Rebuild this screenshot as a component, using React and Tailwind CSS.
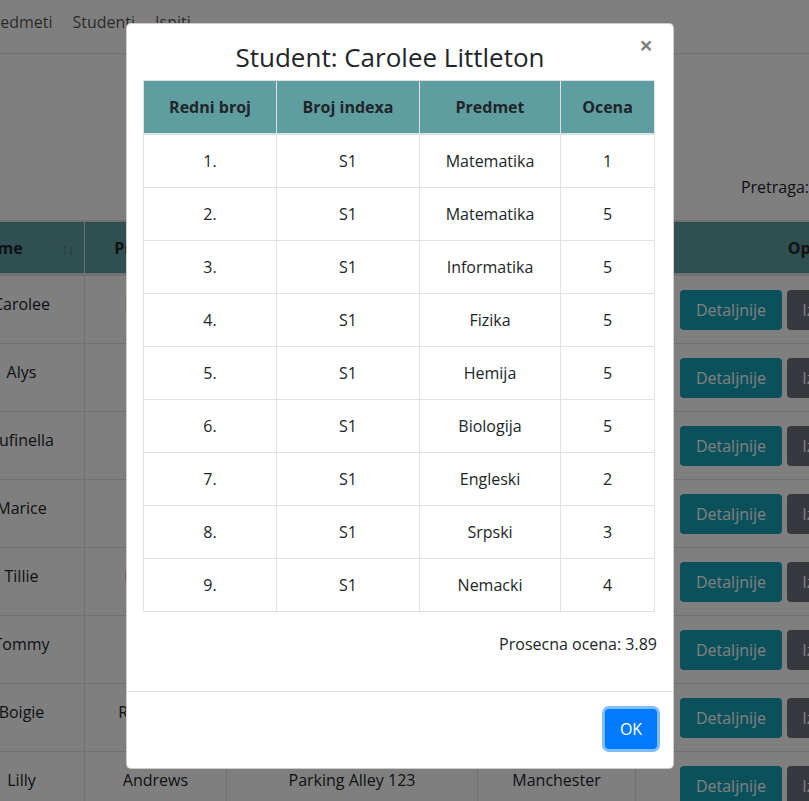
import React from "react";

const grades = [
  ["1.", "S1", "Matematika", "1"],
  ["2.", "S1", "Matematika", "5"],
  ["3.", "S1", "Informatika", "5"],
  ["4.", "S1", "Fizika", "5"],
  ["5.", "S1", "Hemija", "5"],
  ["6.", "S1", "Biologija", "5"],
  ["7.", "S1", "Engleski", "2"],
  ["8.", "S1", "Srpski", "3"],
  ["9.", "S1", "Nemacki", "4"],
];

const students = [
  { ime: "Carolee", prezime: "Littleton", adresa: "Maple Street 12", grad: "London" },
  { ime: "Alys", prezime: "Bride", adresa: "Oak Lane 4", grad: "Leeds" },
  { ime: "Rufinella", prezime: "Keyes", adresa: "Hill Road 8", grad: "York" },
  { ime: "Marice", prezime: "Pride", adresa: "Green Way 21", grad: "Bath" },
  { ime: "Tillie", prezime: "Hartwell", adresa: "River Road 3", grad: "Derby" },
  { ime: "Tommy", prezime: "Ivins", adresa: "Park Lane 17", grad: "Hull" },
  { ime: "Boigie", prezime: "Rosenthal", adresa: "Mill Street 9", grad: "Bristol" },
  { ime: "Lilly", prezime: "Andrews", adresa: "Parking Alley 123", grad: "Manchester" },
];

const cols = ["w-[126px]", "w-[142px]", "w-[251px]", "w-[158px]", "w-[354px]"];
const headPad = ["pl-3 pr-[40px]", "pl-3 pr-[30px]", "pl-3 pr-[30px]", "pl-3 pr-[30px]"];
const modalCols = ["w-[133px]", "w-[143px]", "w-[141px]", "w-[95px] border-r"];

function SortIcon() {
  return (
    <span className="absolute right-[10px] top-1/2 -translate-y-1/2 text-[15px] font-normal opacity-30 tracking-[-1px]">
      ↑↓
    </span>
  );
}

export default function App() {
  return (
    <div className="relative w-[809px] h-[801px] overflow-hidden bg-white text-[16px] leading-[24px] text-[#212529] font-['Open_Sans',sans-serif]">
      {/* page behind the modal */}
      <div className="-ml-[41px] w-[1100px]">
        <nav className="h-[54px] border-b border-[#dee2e6] flex items-start pt-[10px] pl-[15px] text-black/70">
          <a className="px-[10px]">Predmeti</a>
          <a className="px-[10px]">Studenti</a>
          <a className="px-[10px]">Ispiti</a>
        </nav>

        <div className="w-[1031px] pt-[117px]">
          <div className="flex justify-end items-center h-[32px] mb-[17px]">
            <span>Pretraga:</span>
            <div className="ml-2 w-[173px] h-[31px] border border-[#ced4da] rounded-[3px] bg-white" />
          </div>

          {/* table header */}
          <div className="flex h-[56px] border-t-2 border-b-[3px] border-[#dee2e6] bg-[#5f9ea0] font-bold">
            {["Ime", "Prezime", "Adresa", "Grad"].map((h, i) => (
              <div
                key={h}
                className={`${cols[i]} ${headPad[i]} relative flex items-center justify-center border-r border-[#dee2e6]`}
              >
                {h}
                <SortIcon />
              </div>
            ))}
            <div className={`${cols[4]} flex items-center justify-center`}>Opcije</div>
          </div>

          {/* table rows */}
          {students.map((s) => (
            <div key={s.ime} className="flex h-[68px] border-b border-[#dee2e6]">
              <div className={`${cols[0]} pt-[16px] text-center border-r border-[#dee2e6]`}>{s.ime}</div>
              <div className={`${cols[1]} pt-[16px] text-center border-r border-[#dee2e6]`}>{s.prezime}</div>
              <div className={`${cols[2]} pt-[16px] text-center border-r border-[#dee2e6]`}>{s.adresa}</div>
              <div className={`${cols[3]} pt-[16px] text-center border-r border-[#dee2e6]`}>{s.grad}</div>
              <div className={`${cols[4]} pt-[14px] pl-[44px] flex items-start gap-[5px]`}>
                <button className="w-[102px] h-[40px] rounded-[4px] bg-[#17a2b8] text-white">Detaljnije</button>
                <button className="w-[80px] h-[40px] rounded-[4px] bg-[#6c757d] text-white">Izmeni</button>
                <button className="w-[74px] h-[40px] rounded-[4px] bg-[#dc3545] text-white">Obriši</button>
              </div>
            </div>
          ))}
        </div>
      </div>

      {/* backdrop */}
      <div className="absolute inset-0 bg-black/50" />

      {/* modal */}
      <div className="absolute left-[126px] top-[23px] w-[548px] bg-white border border-black/20 rounded-[5px]">
        <div className="relative pt-[18px] pb-[8px] pr-[20px] text-center">
          <h3 className="text-[26px] leading-[30px] font-medium">Student: Carolee Littleton</h3>
          <button className="absolute right-[20px] top-[6px] text-[24px] leading-[30px] font-bold text-black/50">
            ×
          </button>
        </div>

        <div className="px-4 pb-[35px]">
          <div className="w-[512px] text-center">
            <div className="flex h-[55px] bg-[#5f9ea0] font-bold border-t border-b-2 border-[#dee2e6]">
              {["Redni broj", "Broj indexa", "Predmet", "Ocena"].map((h, i) => (
                <div key={h} className={`${modalCols[i]} flex items-center justify-center border-l border-[#dee2e6]`}>
                  {h}
                </div>
              ))}
            </div>
            {grades.map((row) => (
              <div key={row[0]} className="flex h-[53px] border-b border-[#dee2e6]">
                {row.map((c, i) => (
                  <div key={i} className={`${modalCols[i]} flex items-center justify-center border-l border-[#dee2e6]`}>
                    {c}
                  </div>
                ))}
              </div>
            ))}
          </div>
          <p className="mt-[20px] text-right">Prosecna ocena: 3.89</p>
        </div>

        <div className="border-t border-[#dee2e6] flex justify-end pt-[17px] pb-[19px] pr-4">
          <button className="w-[52px] h-[40px] rounded-[4px] bg-[#007bff] text-white ring-[3px] ring-[#80bdff]">
            OK
          </button>
        </div>
      </div>
    </div>
  );
}
